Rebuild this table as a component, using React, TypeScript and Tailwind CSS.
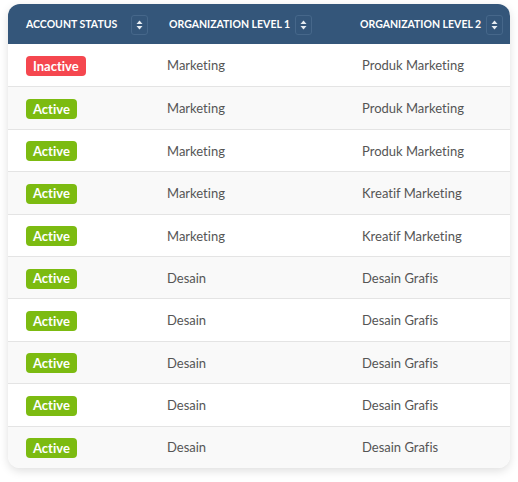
const rows = [
  { status: 'Inactive', level1: 'Marketing', level2: 'Produk Marketing' },
  { status: 'Active', level1: 'Marketing', level2: 'Produk Marketing' },
  { status: 'Active', level1: 'Marketing', level2: 'Produk Marketing' },
  { status: 'Active', level1: 'Marketing', level2: 'Kreatif Marketing' },
  { status: 'Active', level1: 'Marketing', level2: 'Kreatif Marketing' },
  { status: 'Active', level1: 'Desain', level2: 'Desain Grafis' },
  { status: 'Active', level1: 'Desain', level2: 'Desain Grafis' },
  { status: 'Active', level1: 'Desain', level2: 'Desain Grafis' },
  { status: 'Active', level1: 'Desain', level2: 'Desain Grafis' },
  { status: 'Active', level1: 'Desain', level2: 'Desain Grafis' },
];

function SortButton() {
  return (
    <span className="flex h-[20px] w-[17px] shrink-0 items-center justify-center rounded-[3px] border border-[#46678a]">
      <svg width="7" height="10" viewBox="0 0 7 10" fill="#e6ecf2">
        <path d="M3.5 0.5 L6.5 4 H0.5 Z" />
        <path d="M3.5 9.5 L6.5 6 H0.5 Z" />
      </svg>
    </span>
  );
}

function StatusBadge({ status }: { status: string }) {
  const active = status === 'Active';
  return (
    <span
      className={`inline-flex h-[20px] items-center rounded-[4px] px-[7px] text-[13px] font-bold leading-none text-white ${
        active ? 'bg-[#7cbb11]' : 'bg-[#f5474f]'
      }`}
    >
      {status}
    </span>
  );
}

export default function App() {
  return (
    <div className="min-h-screen bg-white pl-[8px] pr-[8px] pt-[4px] font-['Lato',sans-serif] [font-variant-ligatures:none]">
      <div className="w-[502px] overflow-hidden rounded-[12px] bg-white shadow-[0_3px_10px_rgba(0,0,0,0.13)]">
        {/* Header */}
        <div className="grid h-[40px] grid-cols-[141px_193px_1fr] items-center whitespace-nowrap bg-[#34567a] pl-[18px] pt-[1px] text-[10.5px] font-bold uppercase text-white">
          <div className="flex items-center gap-[14px]">
            <span>Account Status</span>
            <SortButton />
          </div>
          <div className="flex items-center gap-[5px] pl-[2px]">
            <span>Organization Level 1</span>
            <SortButton />
          </div>
          <div className="flex items-center gap-[5px]">
            <span>Organization Level 2</span>
            <SortButton />
          </div>
        </div>

        {/* Body */}
        {rows.map((row, i) => (
          <div
            key={i}
            className={`grid h-[42.4px] grid-cols-[141px_195px_1fr] items-center pl-[18px] pt-[2px] text-[13px] text-[#555555] ${
              i > 0 ? 'border-t border-[#e4e4e4]' : ''
            } ${i % 2 === 1 ? 'bg-[#f9f9f9]' : 'bg-white'}`}
          >
            <div>
              <StatusBadge status={row.status} />
            </div>
            <div>{row.level1}</div>
            <div>{row.level2}</div>
          </div>
        ))}
      </div>
    </div>
  );
}
